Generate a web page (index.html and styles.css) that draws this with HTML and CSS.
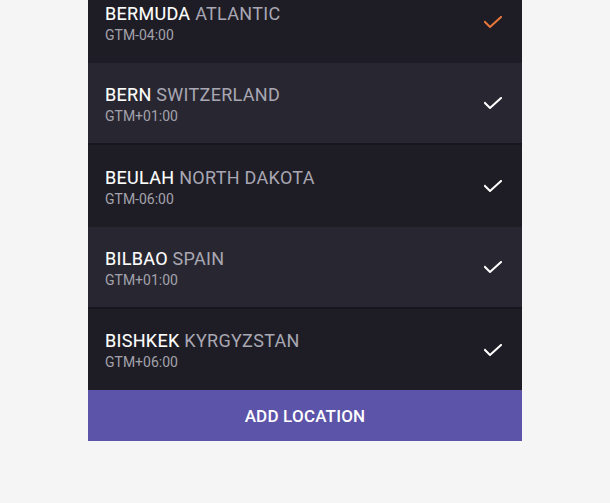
FILE: index.html
```html
<!DOCTYPE html>
<html lang="en">
<head>
  <meta charset="UTF-8">
  <meta name="viewport" content="width=device-width, initial-scale=1.0">
  <title>Locations</title>
  <link rel="stylesheet" href="styles.css">
</head>
<body>
  <!-- Location list -->
  <div class="panel">
    <div class="row">
      <div class="info">
        <div class="title"><span class="city">BERMUDA</span> ATLANTIC</div>
        <div class="zone">GTM-04:00</div>
      </div>
      <svg class="check active" viewBox="0 0 18 12" width="18" height="12"><path d="M1 6 L6 11 L17 1"/></svg>
    </div>
    <div class="row alt">
      <div class="info">
        <div class="title"><span class="city">BERN</span> SWITZERLAND</div>
        <div class="zone">GTM+01:00</div>
      </div>
      <svg class="check" viewBox="0 0 18 12" width="18" height="12"><path d="M1 6 L6 11 L17 1"/></svg>
    </div>
    <div class="row">
      <div class="info">
        <div class="title"><span class="city">BEULAH</span> NORTH DAKOTA</div>
        <div class="zone">GTM-06:00</div>
      </div>
      <svg class="check" viewBox="0 0 18 12" width="18" height="12"><path d="M1 6 L6 11 L17 1"/></svg>
    </div>
    <div class="row alt">
      <div class="info">
        <div class="title"><span class="city">BILBAO</span> SPAIN</div>
        <div class="zone">GTM+01:00</div>
      </div>
      <svg class="check" viewBox="0 0 18 12" width="18" height="12"><path d="M1 6 L6 11 L17 1"/></svg>
    </div>
    <div class="row">
      <div class="info">
        <div class="title"><span class="city">BISHKEK</span> KYRGYZSTAN</div>
        <div class="zone">GTM+06:00</div>
      </div>
      <svg class="check" viewBox="0 0 18 12" width="18" height="12"><path d="M1 6 L6 11 L17 1"/></svg>
    </div>
    <button class="add-btn">ADD LOCATION</button>
  </div>
</body>
</html>
```

FILE: styles.css
```css
body {
  margin: 0;
  padding: 0;
  background: #f5f5f5;
  font-family: Roboto, "Liberation Sans", sans-serif;
  height: 503px;
  overflow: hidden;
}

.panel {
  width: 434px;
  margin: -19px 0 0 88px;
  background: #1e1d25;
}

.row {
  height: 82px;
  box-sizing: border-box;
  display: flex;
  align-items: center;
  justify-content: space-between;
  padding: 0 20px 0 17px;
  background: #1e1d25;
}

.row:nth-child(5) {
  height: 81px;
}

.row.alt {
  background: #282731;
  border-bottom: 2px solid #17161c;
}

.info {
  padding-top: 2px;
}

.title {
  font-size: 18px;
  line-height: 20px;
  color: #a8a7b3;
  letter-spacing: 0.3px;
}

.city {
  color: #ffffff;
  -webkit-text-stroke: 0.1px #ffffff;
}

.zone {
  font-size: 14px;
  line-height: 16px;
  color: #a3a2ab;
  margin-top: 3px;
}

.check {
  fill: none;
  stroke: #ffffff;
  stroke-width: 2;
  stroke-linecap: square;
}

.check.active {
  stroke: #e8773a;
}

.add-btn {
  display: block;
  width: 100%;
  height: 51px;
  padding: 0;
  border: none;
  background: #5c54a9;
  color: #ffffff;
  font-family: Roboto, "Liberation Sans", sans-serif;
  font-size: 17px;
  font-weight: 500;
  letter-spacing: 0.2px;
  cursor: pointer;
}
```
